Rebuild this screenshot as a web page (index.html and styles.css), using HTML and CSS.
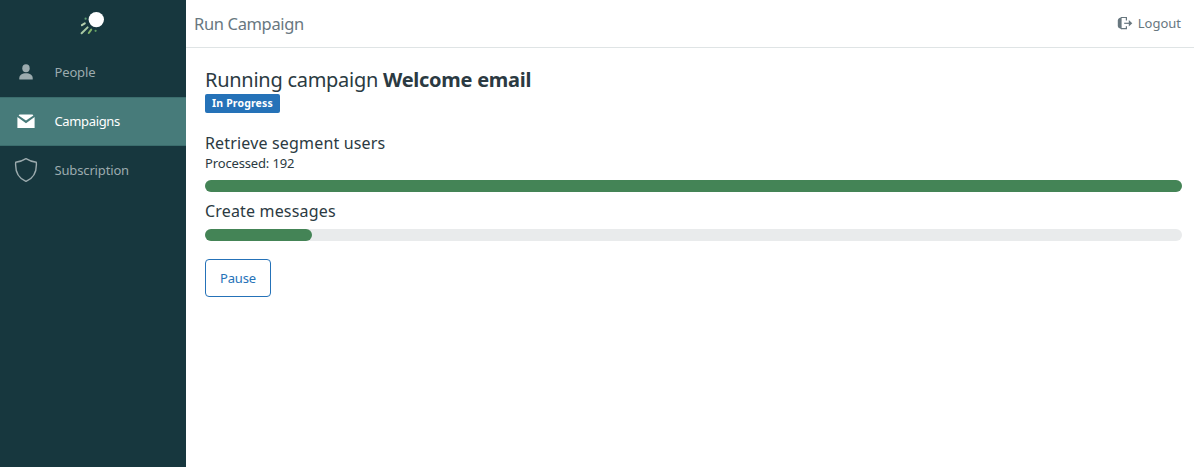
FILE: index.html
```
<!DOCTYPE html>
<html lang="en">

<head>
    <meta charset="UTF-8">
    <title>Run Campaign</title>
    <link rel="stylesheet" href="styles.css">
</head>

<body>
    <div class="page">
        <nav class="sidebar">
            <a href="#" class="logo">
                <svg width="26" height="26" viewBox="0 0 26 26">
                    <circle cx="17.3" cy="8.6" r="7.7" fill="#fff"/>
                    <g fill="none" stroke-linecap="round" stroke-width="2">
                        <path d="M2.9 14.2L5.8 12.4" stroke="#b5cfae"/>
                        <path d="M2.6 22.2L8.6 16.4" stroke="#a9c9a4"/>
                        <path d="M9.8 22L12.2 18.6" stroke="#86b56c"/>
                    </g>
                    <circle cx="6.6" cy="7.7" r="1.1" fill="#5f9c72"/>
                    <circle cx="16.6" cy="19.8" r="1.1" fill="#5f9c62"/>
                </svg>
            </a>
            <a href="#" class="item">
                <svg class="icon" width="24" height="24" viewBox="0 0 24 24" fill="currentColor">
                    <ellipse cx="12" cy="8.3" rx="3.7" ry="4"/>
                    <path d="M5.3 19.6V18.2C5.3 15 8.2 13.3 12 13.3S18.7 15 18.7 18.2V19.6Z"/>
                </svg>
                <span>People</span>
            </a>
            <a href="#" class="item active">
                <svg class="icon" width="24" height="24" viewBox="0 0 24 24" fill="currentColor">
                    <path d="M5.5 5.4H18.5L19.4 6.4L12 11.4L4.6 6.4Z"/>
                    <path d="M3.4 8L12 14.2L20.6 8V18.9H3.4Z"/>
                </svg>
                <span>Campaigns</span>
            </a>
            <a href="#" class="item">
                <svg class="icon" width="24" height="24" viewBox="0 0 24 24" fill="none" stroke="currentColor" stroke-width="1.4" stroke-linejoin="round">
                    <path d="M12 .7C8.6 2.9 5 4 1.7 4.3C1 13.6 3.6 20 12 23.4C20.4 20 23 13.6 22.3 4.3C19 4 15.4 2.9 12 .7Z"/>
                </svg>
                <span>Subscription</span>
            </a>
        </nav>
        <div class="main">
            <header class="topbar">
                <h1>Run Campaign</h1>
                <a href="#" class="logout">
                    <svg width="16" height="14" viewBox="0 0 16 14">
                        <path d="M4 1.5H9.4V4.4M9.4 10.2V12.7H4" fill="none" stroke="currentColor" stroke-width="1.2"/>
                        <path d="M4.6 .9V13.3L2 12.1Q.8 11.3 .8 10V4.4Q.8 3 2 2.2Z" fill="currentColor"/>
                        <path d="M7.2 7.3H12.5" stroke="currentColor" stroke-width="1.2"/>
                        <path d="M11.8 4.1L15.3 7.3L11.8 10.5Z" fill="currentColor"/>
                    </svg>
                    <span>Logout</span>
                </a>
            </header>
            <div class="content">
                <h2>Running campaign <strong>Welcome email</strong></h2>
                <span class="badge">In Progress</span>
                <h3>Retrieve segment users</h3>
                <p class="processed">Processed: 192</p>
                <div class="progress">
                    <div class="bar" style="width: 100%"></div>
                </div>
                <h3 class="second">Create messages</h3>
                <div class="progress">
                    <div class="bar" style="width: 11%"></div>
                </div>
                <button type="button" class="pause">Pause</button>
            </div>
        </div>
    </div>
</body>

</html>
```
FILE: styles.css
```
* {
    margin: 0;
    padding: 0;
    box-sizing: border-box;
}

body {
    font-family: "Noto Sans", "Open Sans", sans-serif;
    font-size: 13px;
    color: #2b3a42;
    background: #fff;
}

a {
    color: inherit;
    text-decoration: none;
}

.page {
    display: flex;
    height: 100vh;
}

/* sidebar */
.sidebar {
    width: 186px;
    flex-shrink: 0;
    background: #17373e;
}

.logo {
    display: block;
    height: 48px;
    padding: 11px 0 0 79px;
}

.logo svg {
    display: block;
}

.item {
    display: flex;
    align-items: center;
    height: 49px;
    padding: 0 0 2px 14px;
    color: #9cabae;
    letter-spacing: -0.15px;
}

.icon {
    margin-right: 16.5px;
}

.item.active {
    color: #fff;
    background: #477b7a;
    border-top: 1px solid #3b6d6d;
    border-bottom: 1px solid #3b6d6d;
    letter-spacing: -0.35px;
}

/* top bar */
.main {
    flex: 1;
}

.topbar {
    display: flex;
    align-items: center;
    justify-content: space-between;
    height: 48px;
    padding: 0 13px 0 8px;
    border-bottom: 1px solid #dfe4e5;
    color: #68777f;
}

.topbar h1 {
    font-size: 16.5px;
    font-weight: normal;
    letter-spacing: -0.35px;
}

.logout {
    display: flex;
    align-items: center;
    padding-bottom: 1px;
}

.logout svg {
    margin-right: 5px;
}

/* campaign progress */
.content {
    padding: 18px 12px 0 19px;
}

h2 {
    height: 28px;
    font-size: 20px;
    font-weight: normal;
    line-height: 28px;
    letter-spacing: -0.27px;
}

.badge {
    display: block;
    width: 75px;
    height: 19px;
    border-radius: 2px;
    background: #2572b8;
    color: #fff;
    font-size: 10.5px;
    font-weight: bold;
    line-height: 19px;
    letter-spacing: 0.15px;
    text-align: center;
}

h3 {
    height: 20px;
    margin-top: 20px;
    font-size: 16px;
    font-weight: normal;
    line-height: 20px;
    letter-spacing: 0.17px;
}

.processed {
    height: 20px;
    margin-bottom: 7px;
    line-height: 20px;
    letter-spacing: -0.15px;
}

.second {
    margin: 9px 0 8.5px;
}

.progress {
    height: 11.5px;
    border-radius: 6px;
    background: #e9ebec;
}

.bar {
    height: 100%;
    border-radius: 6px;
    background: #448456;
}

.pause {
    display: block;
    width: 66px;
    height: 38px;
    margin-top: 18.5px;
    border: 1px solid #2572b8;
    border-radius: 4px;
    background: #fff;
    color: #2572b8;
    font-family: inherit;
    font-size: 13px;
    letter-spacing: -0.2px;
}
```
